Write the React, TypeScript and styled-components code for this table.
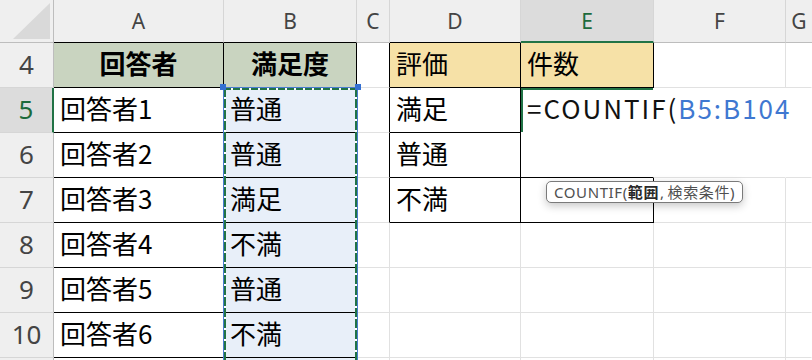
import React from "react";
import styled, { createGlobalStyle, css } from "styled-components";

const GREEN = "#217346";
const GRID = "#e1e1e1";
const HEAD_LINE = "#bdbdbd";

const Global = createGlobalStyle`
  html, body { margin: 0; padding: 0; background: #fff; }
  body { font-family: "Noto Sans CJK JP", "Noto Sans", sans-serif; }
`;

const Sheet = styled.div`
  position: relative;
  width: 812px;
  height: 360px;
  overflow: hidden;
  display: grid;
  grid-template-columns: 54px 170px 133px 33px 131px 133px 132px 1fr;
  grid-template-rows: 43px repeat(8, 45px);
  background: #fff;
`;

const Corner = styled.div`
  box-sizing: border-box;
  background: #efefef;
  border-right: 1px solid ${HEAD_LINE};
  border-bottom: 1px solid ${HEAD_LINE};
  display: flex;
  align-items: flex-end;
  justify-content: flex-end;
  padding: 0 3px 3px 0;
`;

const ColHead = styled.div<{ $active?: boolean; $under: string; $last?: boolean }>`
  box-sizing: border-box;
  background: ${(p) => (p.$active ? "#dcdcdc" : "#efefef")};
  color: ${(p) => (p.$active ? "#1d6b3c" : "#444")};
  border-right: ${(p) => (p.$last ? "none" : "1px solid #d6d6d6")};
  border-bottom: ${(p) => (p.$active ? `2px solid ${GREEN}` : `1px solid ${p.$under}`)};
  font-family: "Noto Sans", sans-serif;
  font-size: 21px;
  line-height: 1;
  display: flex;
  align-items: center;
  justify-content: center;
  padding-top: 1px;
`;

const RowHead = styled.div<{ $active?: boolean }>`
  box-sizing: border-box;
  background: ${(p) => (p.$active ? "#dcdcdc" : "#efefef")};
  color: ${(p) => (p.$active ? "#1d6b3c" : "#444")};
  border-right: ${(p) => (p.$active ? `2px solid ${GREEN}` : `1px solid ${HEAD_LINE}`)};
  border-bottom: 1px solid #d6d6d6;
  font-family: "Noto Sans", sans-serif;
  font-size: 26px;
  line-height: 1;
  display: flex;
  align-items: center;
  justify-content: center;
  padding-bottom: 3px;
`;

const Cell = styled.div<{
  $fill?: string;
  $right: string;
  $bottom: string;
  $center?: boolean;
  $bold?: boolean;
  $active?: boolean;
}>`
  box-sizing: border-box;
  min-width: 0;
  background: ${(p) => p.$fill || "#fff"};
  border-right: 1px solid ${(p) => p.$right};
  border-bottom: 1px solid ${(p) => p.$bottom};
  font-size: 26px;
  line-height: 1;
  color: #000;
  white-space: nowrap;
  display: flex;
  align-items: center;
  padding: 0 0 4px 6px;
  ${(p) =>
    p.$center &&
    css`
      justify-content: center;
      padding-left: 0;
    `}
  ${(p) =>
    p.$bold &&
    css`
      font-weight: 700;
    `}
  ${(p) =>
    p.$active &&
    css`
      box-shadow: inset 2px 2px 0 ${GREEN};
      position: relative;
      z-index: 2;
    `}
`;

const Formula = styled.span`
  font-size: 26px;
  letter-spacing: 2px;
  color: #111;
`;

const RangeRef = styled.span`
  color: #3f78d1;
`;

/* blue reference outline plus the green marching-ants copy frame */
const Marquee = styled.div`
  position: absolute;
  left: 223px;
  top: 87px;
  width: 135px;
  height: 290px;
  box-sizing: border-box;
  border: 1px solid #4a7bd0;
  border-bottom: none;
  pointer-events: none;
  z-index: 3;
  &::before {
    content: "";
    position: absolute;
    inset: 0;
    background:
      repeating-linear-gradient(90deg, ${GREEN} 0 7px, #fff 7px 9px) top left / 100% 2px no-repeat,
      repeating-linear-gradient(180deg, ${GREEN} 0 9px, #fff 9px 11px) top left / 2px 100% no-repeat,
      repeating-linear-gradient(180deg, ${GREEN} 0 9px, #fff 9px 11px) top right / 2px 100% no-repeat;
  }
  &::after {
    content: "";
    position: absolute;
    inset: -4px -4px auto -4px;
    height: 6px;
    background:
      linear-gradient(#3470d2, #3470d2) left / 6px 6px no-repeat,
      linear-gradient(#3470d2, #3470d2) right / 6px 6px no-repeat;
  }
`;

const Tip = styled.div`
  position: absolute;
  left: 546px;
  top: 181px;
  height: 22px;
  box-sizing: border-box;
  padding: 0 7px;
  display: flex;
  align-items: center;
  background: #fff;
  border: 1px solid #7a7a7a;
  border-radius: 5px;
  box-shadow: 0 3px 8px rgba(0, 0, 0, 0.22);
  font-family: "Noto Sans", "Noto Sans CJK JP", sans-serif;
  font-size: 15px;
  letter-spacing: 0.6px;
  line-height: 1;
  color: #505050;
  white-space: nowrap;
  z-index: 4;
`;

const Arg = styled.b`
  font-weight: 700;
  color: #2a2a2a;
  margin-right: 1px;
`;

const Rest = styled.span`
  margin-left: 3px;
`;

const COLS = ["A", "B", "C", "D", "E", "F", "G"];
const ROWS = [4, 5, 6, 7, 8, 9, 10, 11];

const values: Record<string, string> = {
  A4: "回答者",
  B4: "満足度",
  A5: "回答者1",
  B5: "普通",
  A6: "回答者2",
  B6: "普通",
  A7: "回答者3",
  B7: "満足",
  A8: "回答者4",
  B8: "不満",
  A9: "回答者5",
  B9: "普通",
  A10: "回答者6",
  B10: "不満",
  D4: "評価",
  E4: "件数",
  D5: "満足",
  D6: "普通",
  D7: "不満",
};

const boxed = (r: number, c: number) =>
  ((c === 0 || c === 1) && r >= 4) || ((c === 3 || c === 4) && r >= 4 && r <= 7);

const fillOf = (r: number, c: number) => {
  if (r === 4 && c <= 1) return "#c9d4c0";
  if (r === 4 && (c === 3 || c === 4)) return "#f6e1a7";
  if (c === 1 && r >= 5) return "#e8eff9";
  return undefined;
};

// cells whose grid lines are hidden while the formula is being edited
const noRight = new Set(["E5", "F5", "E6", "F6", "G5", "G6"]);
const noBottom = new Set(["E5", "F5", "G5"]);

const rightOf = (r: number, c: number) => {
  const key = COLS[c] + r;
  if (noRight.has(key) || c === COLS.length - 1) return "transparent";
  return boxed(r, c) || boxed(r, c + 1) ? "#000" : GRID;
};

const bottomOf = (r: number, c: number) => {
  const key = COLS[c] + r;
  if (noBottom.has(key)) return "transparent";
  return boxed(r, c) || boxed(r + 1, c) ? "#000" : GRID;
};

export default function App() {
  return (
    <>
      <Global />
      <Sheet>
        <Corner>
          <svg width="37" height="36" viewBox="0 0 37 36">
            <polygon points="0,36 37,36 37,0" fill="#d9d9d9" />
          </svg>
        </Corner>
        {COLS.map((k, c) => (
          <ColHead
            key={k}
            $active={k === "E"}
            $last={c === COLS.length - 1}
            $under={boxed(4, c) ? "#000" : HEAD_LINE}
          >
            {k}
          </ColHead>
        ))}
        {ROWS.map((r) => (
          <React.Fragment key={r}>
            {/* the last row only peeks in at the bottom edge, so its number stays out of view */}
            <RowHead $active={r === 5}>{r < 11 ? r : ""}</RowHead>
            {COLS.map((k, c) => {
              const key = k + r;
              return (
                <Cell
                  key={key}
                  $fill={fillOf(r, c)}
                  $right={rightOf(r, c)}
                  $bottom={bottomOf(r, c)}
                  $center={r === 4 && c <= 1}
                  $bold={r === 4 && c <= 1}
                  $active={key === "E5"}
                >
                  {key === "E5" ? (
                    <Formula>
                      =COUNTIF(<RangeRef>B5:B104</RangeRef>
                    </Formula>
                  ) : (
                    values[key] ?? ""
                  )}
                </Cell>
              );
            })}
          </React.Fragment>
        ))}
        <Marquee />
        <Tip>
          COUNTIF(<Arg>範囲</Arg>,<Rest>検索条件)</Rest>
        </Tip>
      </Sheet>
    </>
  );
}
